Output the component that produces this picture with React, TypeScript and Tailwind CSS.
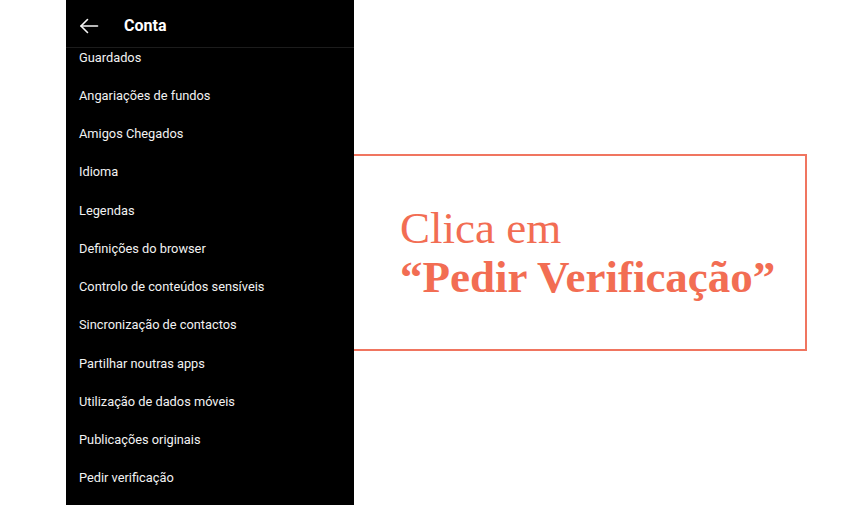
import React from "react";

const items = [
  "Guardados",
  "Angariações de fundos",
  "Amigos Chegados",
  "Idioma",
  "Legendas",
  "Definições do browser",
  "Controlo de conteúdos sensíveis",
  "Sincronização de contactos",
  "Partilhar noutras apps",
  "Utilização de dados móveis",
  "Publicações originais",
  "Pedir verificação",
];

export default function App() {
  return (
    <div className="flex h-[505px] w-[850px] overflow-hidden bg-white">
      <div className="w-[66px] shrink-0" />
      <div className="flex w-[288px] shrink-0 flex-col overflow-hidden bg-black font-['Roboto',sans-serif] text-[#f2f2f2]">
        <div className="relative z-10 flex h-[48px] shrink-0 items-center border-b border-[#1c1c1c] bg-black pl-[13px] pt-[4px]">
          <svg width="20" height="16" viewBox="0 0 20 16" fill="none" stroke="#f5f5f5" strokeWidth="1.6" strokeLinecap="round" strokeLinejoin="round">
            <path d="M18.5 8H2" />
            <path d="M8.5 1.5L2 8l6.5 6.5" />
          </svg>
          <span className="ml-[25px] text-[16px] font-bold text-white">Conta</span>
        </div>
        <div className="-mt-[10px] flex flex-col">
          {items.map((t) => (
            <div key={t} className="flex h-[38.27px] shrink-0 items-center pl-[13px] text-[12.8px]">
              {t}
            </div>
          ))}
        </div>
      </div>
      <div className="flex flex-col pt-[154px]">
        <div className="flex h-[197px] w-[453px] flex-col justify-center border-2 border-l-0 border-[#f07560] pl-[46px] font-['Liberation_Serif',serif] text-[#f26d53]">
          <div className="text-[45px] leading-[49px]">Clica em</div>
          <div className="text-[45px] font-bold leading-[49px]">“Pedir Verificação”</div>
        </div>
      </div>
    </div>
  );
}
